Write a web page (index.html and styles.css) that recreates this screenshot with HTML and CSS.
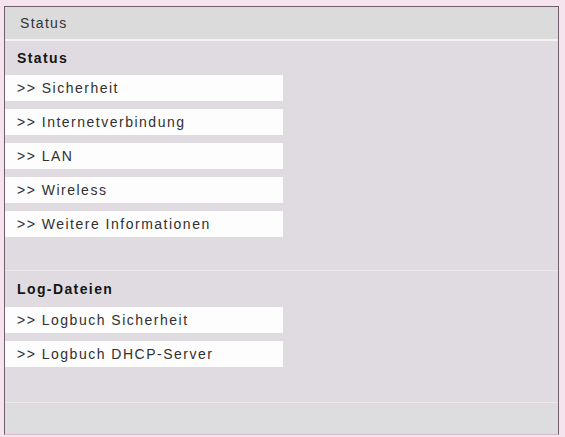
FILE: index.html
```html
<!DOCTYPE html>
<html lang="de">
<head>
<meta charset="utf-8">
<title>Status</title>
<link rel="stylesheet" href="styles.css">
</head>
<body>
<div class="panel">
  <div class="titlebar">Status</div>
  <div class="content">
    <section class="group">
      <h2 class="group-title">Status</h2>
      <ul class="links">
        <li class="link">&gt;&gt; Sicherheit</li>
        <li class="link">&gt;&gt; Internetverbindung</li>
        <li class="link">&gt;&gt; LAN</li>
        <li class="link">&gt;&gt; Wireless</li>
        <li class="link">&gt;&gt; Weitere Informationen</li>
      </ul>
    </section>
    <div class="spacer"></div>
    <section class="group group-log">
      <h2 class="group-title group-title-log">Log-Dateien</h2>
      <ul class="links">
        <li class="link">&gt;&gt; Logbuch Sicherheit</li>
        <li class="link">&gt;&gt; Logbuch DHCP-Server</li>
      </ul>
    </section>
    <div class="spacer spacer-bottom"></div>
    <div class="footer"></div>
  </div>
</div>
</body>
</html>
```
FILE: styles.css
```css
html, body {
  margin: 0;
  padding: 0;
}
body {
  background: #f5e4ed;
  font-family: "Liberation Sans", Arial, sans-serif;
  padding: 6px 0 0 4px;
}
.panel {
  width: 555px;
  box-sizing: border-box;
  border: 1px solid #6f5d6c;
  border-bottom-color: #d9b8c9;
  background: #dfdbe0;
}
.titlebar {
  height: 32px;
  line-height: 32px;
  padding-left: 15px;
  font-size: 14px;
  letter-spacing: 1.3px;
  color: #333333;
  background: #dcdbdc;
  border-bottom: 2px solid #f4f3f4;
}
.content {
  display: flex;
  flex-direction: column;
}
.group-title {
  margin: 0;
  height: 34px;
  line-height: 34px;
  padding-left: 12px;
  font-size: 14px;
  font-weight: bold;
  letter-spacing: 1.4px;
  color: #151515;
}
.group-title-log {
  height: 36px;
  line-height: 36px;
}
.links {
  list-style: none;
  margin: 0;
  padding: 0;
  display: flex;
  flex-direction: column;
  gap: 8px;
}
.link {
  width: 278px;
  height: 26px;
  line-height: 26px;
  padding-left: 12px;
  box-sizing: border-box;
  background: #fdfdfd;
  font-size: 14px;
  letter-spacing: 1.5px;
  color: #303030;
  white-space: nowrap;
}
.spacer {
  height: 33px;
  border-bottom: 1px solid #ebe7eb;
}
.spacer-bottom {
  height: 35px;
  border-bottom: 1px solid #ece8ec;
}
.footer {
  height: 31px;
  background: #dddcde;
}
```
